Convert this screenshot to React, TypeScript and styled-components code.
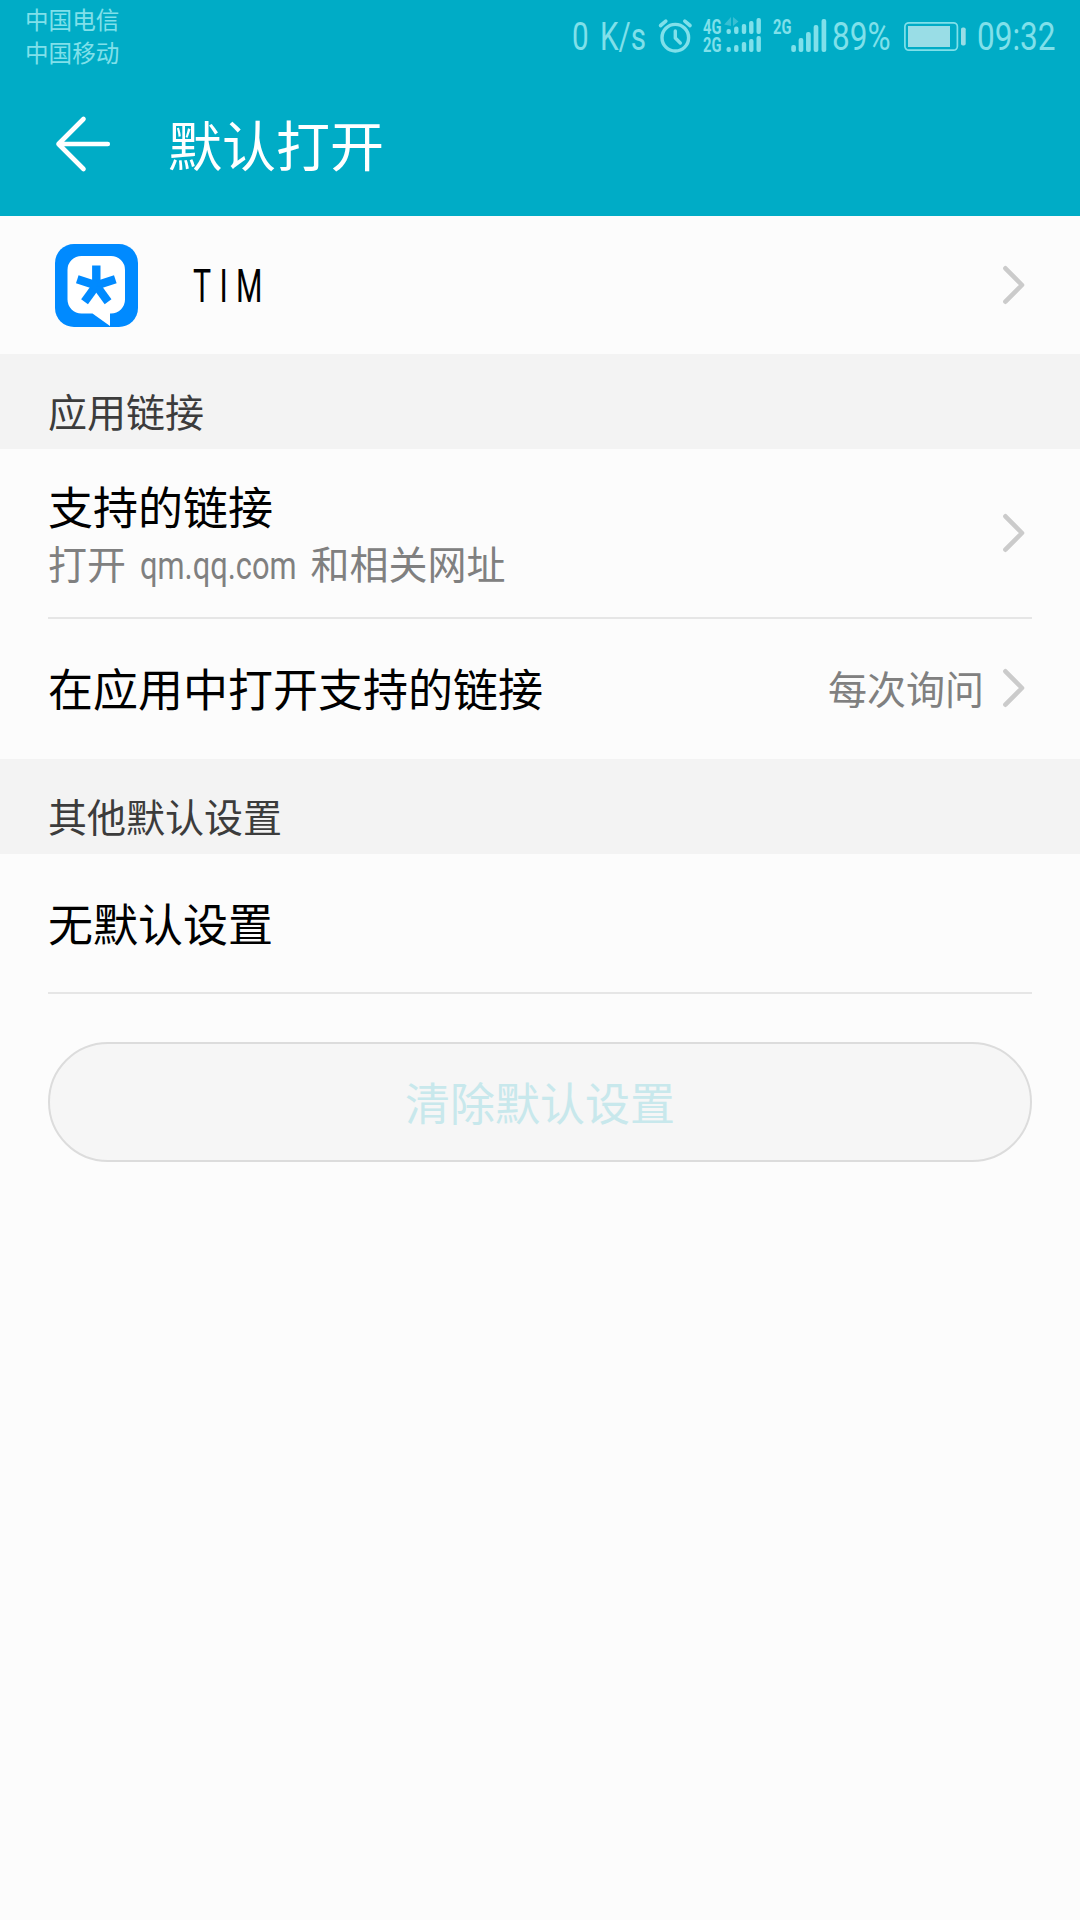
import React from "react";
import styled, { createGlobalStyle } from "styled-components";

const GlobalStyle = createGlobalStyle`
  body {
    margin: 0;
    background: #fcfcfc;
  }
`;

const STATUS = "#80e0ea";

const Screen = styled.div`
  width: 1080px;
  min-height: 1920px;
  display: flex;
  flex-direction: column;
  background: #fcfcfc;
  color: #000;
  font-family: Roboto, "Noto Sans CJK SC", sans-serif;
  font-weight: 400;
`;

const Header = styled.header`
  height: 216px;
  display: flex;
  flex-direction: column;
  background: #00acc6;
  color: #fff;
`;

const StatusBar = styled.div`
  height: 75px;
  box-sizing: border-box;
  padding: 0 24px 0 25px;
  display: flex;
  justify-content: space-between;
  color: ${STATUS};
`;

const Carriers = styled.div`
  padding-top: 5px;
  font-size: 23.6px;
  line-height: 33px;
`;

const StatusItems = styled.div`
  height: 75px;
  display: flex;
  align-items: flex-start;
`;

/* Narrows Latin text horizontally while keeping a fixed slot in the flow. */
const Narrow = styled.span<{ $width: number; $scale: number }>`
  display: block;
  flex: none;
  width: ${(p) => p.$width}px;
  white-space: nowrap;
  transform: scaleX(${(p) => p.$scale});
  transform-origin: left center;
`;

const InlineNarrow = styled(Narrow)`
  display: inline-block;
  margin: 0 5px 0 4px;
`;

const StatusText = styled(Narrow)`
  padding-top: 15px;
  font-size: 38px;
  font-weight: 400;
  line-height: 45px;
`;

const SpeedText = styled(StatusText)`
  word-spacing: 5px;
`;

const NetTag = styled(Narrow)`
  font-size: 21px;
  font-weight: 700;
  line-height: 18px;
`;

const NetTags = styled.div`
  display: flex;
  flex-direction: column;
  padding-top: 18px;
`;

const StatusSvg = styled.svg`
  display: block;
  flex: none;
`;

const TitleBar = styled.div`
  height: 141px;
  box-sizing: border-box;
  padding: 0 55px 4px;
  display: flex;
  align-items: center;
`;

const Title = styled.h1`
  margin: 11px 0 0 55px;
  font-size: 54px;
  line-height: 64px;
  font-weight: 400;
`;

const AppRow = styled.div`
  height: 138px;
  box-sizing: border-box;
  padding: 0 54px 0 55px;
  display: flex;
  align-items: center;
`;

const AppName = styled.div`
  flex: 1;
  padding: 1px 0 0 55px;
  font-size: 47px;
  line-height: 54px;
  letter-spacing: 13px;
`;

const Section = styled.h2`
  margin: 0;
  height: 95px;
  box-sizing: border-box;
  padding: 35px 48px 0;
  background: #f3f3f3;
  color: #3c3c3c;
  font-size: 39px;
  line-height: 50px;
  font-weight: 400;
`;

const Row = styled.div<{ $height: number; $divider?: boolean }>`
  height: ${(p) => p.$height}px;
  box-sizing: border-box;
  margin: 0 48px;
  padding-right: 6px;
  display: flex;
  align-items: center;
  justify-content: space-between;
  border-bottom: ${(p) => (p.$divider ? "2px solid #e6e6e6" : "0")};
`;

const RowText = styled.div<{ $drop?: number }>`
  padding-top: ${(p) => p.$drop ?? 8}px;
`;

const RowLabel = styled.div`
  font-size: 45px;
  line-height: 58px;
`;

const RowHint = styled.div`
  color: #808080;
  font-size: 39px;
  line-height: 54px;
`;

const RowValue = styled.div`
  display: flex;
  align-items: center;
  gap: 18px;
  padding-bottom: 2px;
  color: #808080;
  font-size: 39px;
  line-height: 50px;
`;

const ValueText = styled.span`
  padding-top: 5px;
`;

const ClearButton = styled.button`
  height: 120px;
  box-sizing: border-box;
  margin: 48px 48px 0;
  padding: 7px 0 0;
  border: 2px solid #dcdcdc;
  border-radius: 60px;
  background: #f6f6f6;
  color: #c8e8ec;
  font-family: inherit;
  font-size: 45px;
  line-height: 58px;
`;

const ChevronSvg = styled.svg`
  display: block;
  flex: none;
`;

const Chevron = () => (
  <ChevronSvg width="24" height="40" viewBox="0 0 24 40">
    <path d="M3.4 3.3 20 20 3.4 36.7" fill="none" stroke="#cbcbcb" strokeWidth="4.6" strokeLinecap="round" strokeLinejoin="round" />
  </ChevronSvg>
);

const BackArrow = () => (
  <svg width="58" height="58" viewBox="0 0 58 58">
    <path d="M28.5 4 3.5 29 28.5 54M3.5 29H52.8" fill="none" stroke="#fff" strokeWidth="4.6" strokeLinecap="round" strokeLinejoin="round" />
  </svg>
);

const TimLogo = () => (
  <svg width="83" height="83" viewBox="0 0 83 83">
    <rect width="83" height="83" rx="19" fill="#008aff" />
    <path
      d="M26.5 12h29.5a14 14 0 0 1 14 14v29.5a14 14 0 0 1-14 14H55V82L37.5 69.5h-11a14 14 0 0 1-14-14V26a14 14 0 0 1 14-14z"
      fill="#fff"
    />
    <g transform="translate(41.3 41.5)" fill="#008aff">
      {[0, 72, 144, 216, 288].map((angle) => (
        <rect key={angle} x="-4.2" y="-20" width="8.4" height="21" transform={`rotate(${angle})`} />
      ))}
    </g>
  </svg>
);

const AlarmIcon = () => (
  <StatusSvg width="45" height="75" viewBox="0 0 45 75">
    <g fill="none" stroke={STATUS} strokeWidth="3.4" strokeLinecap="round" strokeLinejoin="round">
      <circle cx="17.3" cy="37.7" r="13.3" />
      <path d="M17.3 31v7l5 5" />
      <path d="M2.6 25.5 7.8 21.2M32 25.5 26.8 21.2" strokeWidth="3.6" />
    </g>
  </StatusSvg>
);

const Bars = ({ xs, tops, bottom, w }: { xs: number[]; tops: number[]; bottom: number; w: number }) => (
  <>
    {xs.map((x, i) => (
      <rect key={x} x={x - w / 2} y={tops[i]} width={w} height={bottom - tops[i]} rx={w / 2.3} fill={STATUS} />
    ))}
  </>
);

const DualSignal = () => {
  const xs = [5.7, 13.3, 21, 28.3, 35.7];
  return (
    <StatusSvg width="50" height="75" viewBox="0 0 50 75">
      <path d="M1.2 24.5 8 17v9zM10 17v9l5.5-4.5z" fill="#38bfd3" />
      <Bars xs={xs} tops={[29, 26.5, 24, 21, 18]} bottom={34} w={4.4} />
      <Bars xs={xs} tops={[47, 45, 42, 39, 36]} bottom={52} w={4.4} />
    </StatusSvg>
  );
};

const SingleSignal = () => (
  <StatusSvg width="41" height="75" viewBox="0 0 41 75">
    <Bars xs={[2.6, 10, 17.4, 25, 32.9]} tops={[45, 38, 32, 25, 19]} bottom={52} w={4.7} />
  </StatusSvg>
);

const Battery = () => (
  <StatusSvg width="73" height="75" viewBox="0 0 73 75">
    <rect x="0.9" y="22.8" width="52.5" height="27.4" rx="4" fill="none" stroke={STATUS} strokeWidth="1.7" />
    <rect x="4" y="26" width="42" height="21" fill="#99dde6" />
    <rect x="57" y="27.5" width="4.7" height="18" rx="1.8" fill="#99dde6" />
  </StatusSvg>
);

export default function App() {
  return (
    <>
      <GlobalStyle />
      <Screen>
        <Header>
          <StatusBar>
            <Carriers>
              <div>中国电信</div>
              <div>中国移动</div>
            </Carriers>
            <StatusItems>
              <SpeedText $width={86} $scale={0.78}>0 K/s</SpeedText>
              <AlarmIcon />
              <NetTags>
                <NetTag $width={20} $scale={0.7}>4G</NetTag>
                <NetTag $width={20} $scale={0.7}>2G</NetTag>
              </NetTags>
              <DualSignal />
              <NetTags>
                <NetTag $width={18} $scale={0.7}>2G</NetTag>
              </NetTags>
              <SingleSignal />
              <StatusText $width={72} $scale={0.83}>89%</StatusText>
              <Battery />
              <StatusText $width={79} $scale={0.83}>09:32</StatusText>
            </StatusItems>
          </StatusBar>
          <TitleBar>
            <BackArrow />
            <Title>默认打开</Title>
          </TitleBar>
        </Header>

        <AppRow>
          <TimLogo />
          <AppName>
            <Narrow $width={80} $scale={0.645}>TIM</Narrow>
          </AppName>
          <Chevron />
        </AppRow>

        <Section>应用链接</Section>
        <Row $height={170} $divider>
          <RowText>
            <RowLabel>支持的链接</RowLabel>
            <RowHint>
              打开{" "}
              <InlineNarrow $width={156} $scale={0.79}>qm.qq.com</InlineNarrow>{" "}
              和相关网址
            </RowHint>
          </RowText>
          <Chevron />
        </Row>
        <Row $height={140}>
          <RowText $drop={5}>
            <RowLabel>在应用中打开支持的链接</RowLabel>
          </RowText>
          <RowValue>
            <ValueText>每次询问</ValueText>
            <Chevron />
          </RowValue>
        </Row>

        <Section>其他默认设置</Section>
        <Row $height={140} $divider>
          <RowText $drop={7}>
            <RowLabel>无默认设置</RowLabel>
          </RowText>
        </Row>
        <ClearButton disabled>清除默认设置</ClearButton>
      </Screen>
    </>
  );
}
